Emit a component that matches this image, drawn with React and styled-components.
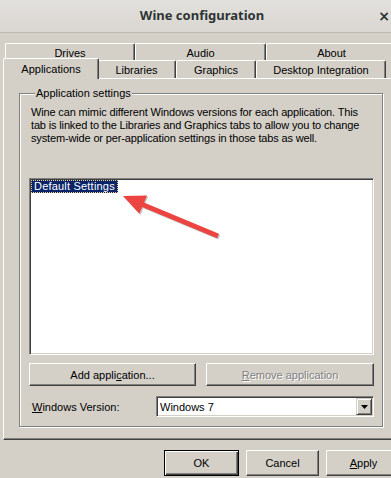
import React from 'react'
import styled, { createGlobalStyle } from 'styled-components'

const GlobalStyle = createGlobalStyle`
  html, body {
    margin: 0;
    padding: 0;
    overflow: hidden;
    background: #d4d0c8;
  }
  body {
    width: 391px;
    height: 478px;
  }
`

const topRow = [
  { label: 'Drives', width: 130 },
  { label: 'Audio', width: 131 },
  { label: 'About', width: 131 },
]

const bottomRow = [
  { label: 'Applications', width: 96, active: true },
  { label: 'Libraries', width: 79 },
  { label: 'Graphics', width: 80 },
  { label: 'Desktop Integration', width: 130 },
]

function App() {
  return (
    <>
      <GlobalStyle />
      <Window>
        <TitleBar>
          <span />
          <Title>Wine configuration</Title>
          <Close>×</Close>
        </TitleBar>

        <Body>
          <Tabs>
            <TabRow>
              {topRow.map(t => (
                <Tab key={t.label} style={{ width: t.width }}>{t.label}</Tab>
              ))}
            </TabRow>
            <TabRow>
              {bottomRow.map(t => (
                <Tab key={t.label} $active={t.active} style={{ width: t.width }}>{t.label}</Tab>
              ))}
            </TabRow>
          </Tabs>

          <Page>
            <Group>
              <Legend>Application settings</Legend>
              <Intro>
                Wine can mimic different Windows versions for each application. This
                tab is linked to the Libraries and Graphics tabs to allow you to change
                system-wide or per-application settings in those tabs as well.
              </Intro>

              <ListBox>
                <Item>Default Settings</Item>
                <Arrow width="200" height="70" viewBox="0 0 200 70">
                  <g transform="translate(1.2 1.2)" opacity="0.35">
                    <line x1="110" y1="24.5" x2="188" y2="57" stroke="#555" strokeWidth="5" />
                    <polygon points="93,17 117,16.4 109.3,34.8" fill="#555" />
                  </g>
                  <line x1="110" y1="24.5" x2="188" y2="57" stroke="#ec4441" strokeWidth="5" />
                  <polygon points="93,17 117,16.4 109.3,34.8" fill="#ec4441" />
                </Arrow>
              </ListBox>

              <ButtonRow>
                <Button>Add appli<u>c</u>ation...</Button>
                <Button disabled><u>R</u>emove application</Button>
              </ButtonRow>

              <VersionRow>
                <Label><u>W</u>indows Version:</Label>
                <Combo>
                  <ComboText>Windows 7</ComboText>
                  <DropButton>
                    <svg width="7" height="4" viewBox="0 0 7 4">
                      <polygon points="0,0 7,0 3.5,4" fill="#000" />
                    </svg>
                  </DropButton>
                </Combo>
              </VersionRow>
            </Group>
          </Page>

          <Footer>
            <DialogButton $default>OK</DialogButton>
            <DialogButton style={{ width: 73 }}>Cancel</DialogButton>
            <DialogButton><u>A</u>pply</DialogButton>
          </Footer>
        </Body>
      </Window>
    </>
  )
}

export default App

const Window = styled.div`
  width: 404px;
  height: 478px;
  background: #d4d0c8;
  display: flex;
  flex-direction: column;
  font-family: "Liberation Sans", Arial, sans-serif;
  font-size: 11px;
  color: #000;
`

const TitleBar = styled.header`
  height: 32px;
  flex: none;
  border-bottom: 1px solid #bdbab4;
  background: linear-gradient(#e2e0dc, #dad7d2);
  display: grid;
  grid-template-columns: 1fr auto 1fr;
  align-items: center;
`

const Title = styled.h1`
  margin: 0 0 2px;
  font-family: "Noto Sans", "DejaVu Sans", sans-serif;
  font-size: 13px;
  font-weight: 700;
  color: #2e3436;
`

const Close = styled.span`
  justify-self: end;
  margin-right: 14px;
  font-family: "DejaVu Sans", sans-serif;
  font-size: 14px;
  font-weight: 700;
  color: #2e3436;
`

const Body = styled.div`
  padding: 10px 0 0 3px;
  display: flex;
  flex-direction: column;
`

const Tabs = styled.div`
  padding: 0 2px;
  display: flex;
  flex-direction: column;
`

const TabRow = styled.div`
  display: flex;
  height: 17px;
  & + & {
    height: 18px;
  }
`

const Tab = styled.div`
  box-sizing: border-box;
  flex: none;
  display: flex;
  align-items: center;
  justify-content: center;
  background: #d4d0c8;
  border-top: 1px solid #fff;
  border-left: 1px solid #fff;
  border-right: 1px solid #404040;
  border-radius: 2px 2px 0 0;
  box-shadow: inset -1px 0 0 #808080;
  padding-top: 1px;
  position: relative;
  ${p => p.$active && `
    margin: -2px -2px -1px;
    height: 21px;
    padding-bottom: 2px;
    z-index: 1;
  `}
`

const Page = styled.div`
  box-sizing: border-box;
  width: 396px;
  height: 362px;
  border-top: 1px solid #fff;
  border-left: 1px solid #fff;
  border-right: 1px solid #404040;
  border-bottom: 1px solid #404040;
  box-shadow: inset -1px -1px 0 #808080;
  padding: 8px 14px 0 15px;
`

const Group = styled.fieldset`
  margin: 0;
  width: 364px;
  height: 340px;
  box-sizing: border-box;
  padding: 6px 8px 0 9px;
  border: 1px solid #808080;
  box-shadow: 1px 1px 0 #fff, inset 1px 1px 0 #fff;
  display: flex;
  flex-direction: column;
`

const Legend = styled.legend`
  margin-left: 6px;
  padding: 0 1px;
  background: #d4d0c8;
  line-height: 13px;
`

const Intro = styled.p`
  margin: 0 0 0 2px;
  line-height: 13px;
  letter-spacing: -0.15px;
  height: 72px;
`

const ListBox = styled.div`
  position: relative;
  height: 177px;
  flex: none;
  box-sizing: border-box;
  background: #fff;
  border-top: 1px solid #808080;
  border-left: 1px solid #808080;
  border-right: 1px solid #fff;
  border-bottom: 1px solid #fff;
  box-shadow: inset 1px 1px 0 #404040, inset -1px -1px 0 #d4d0c8;
  padding: 1px;
`

const Item = styled.div`
  display: inline-block;
  box-sizing: border-box;
  height: 13px;
  line-height: 12px;
  padding: 0 3px;
  letter-spacing: 0.2px;
  background: #0a246a;
  color: #fff;
  outline: 1px dotted #f4d58c;
  outline-offset: -1px;
`

const Arrow = styled.svg`
  position: absolute;
  left: 0;
  top: 0;
  pointer-events: none;
`

const ButtonRow = styled.div`
  margin-top: 8px;
  display: grid;
  grid-template-columns: 167px 168px;
  gap: 10px;
`

const Button = styled.button`
  box-sizing: border-box;
  height: 23px;
  padding: 0;
  font: inherit;
  color: #000;
  background: #d4d0c8;
  border-top: 1px solid #fff;
  border-left: 1px solid #fff;
  border-right: 1px solid #404040;
  border-bottom: 1px solid #404040;
  box-shadow: inset -1px -1px 0 #808080;
  &:disabled {
    color: #808080;
    text-shadow: 1px 1px 0 #fff;
  }
`

const VersionRow = styled.div`
  margin-top: 10px;
  padding-left: 3px;
  display: grid;
  grid-template-columns: 124px 1fr;
  align-items: center;
`

const Label = styled.span``

const Combo = styled.div`
  box-sizing: border-box;
  height: 21px;
  background: #fff;
  border-top: 1px solid #808080;
  border-left: 1px solid #808080;
  border-right: 1px solid #fff;
  border-bottom: 1px solid #fff;
  box-shadow: inset 1px 1px 0 #404040, inset -1px -1px 0 #d4d0c8;
  padding: 2px 2px 2px 3px;
  display: flex;
  align-items: center;
`

const ComboText = styled.span`
  flex: 1;
`

const DropButton = styled.span`
  box-sizing: border-box;
  width: 16px;
  height: 17px;
  margin-right: -1px;
  background: #d4d0c8;
  border-top: 1px solid #d4d0c8;
  border-left: 1px solid #d4d0c8;
  border-right: 1px solid #404040;
  border-bottom: 1px solid #404040;
  box-shadow: inset 1px 1px 0 #fff, inset -1px -1px 0 #808080;
  display: flex;
  align-items: center;
  justify-content: center;
`

const Footer = styled.div`
  margin-top: 10px;
  padding-left: 161px;
  display: flex;
  gap: 7px;
`

const DialogButton = styled(Button)`
  width: 75px;
  height: 26px;
  flex: none;
  ${p => p.$default && `
    border: 1px solid #000;
    box-shadow: inset 1px 1px 0 #fff, inset -1px -1px 0 #404040, inset -2px -2px 0 #808080;
  `}
`
